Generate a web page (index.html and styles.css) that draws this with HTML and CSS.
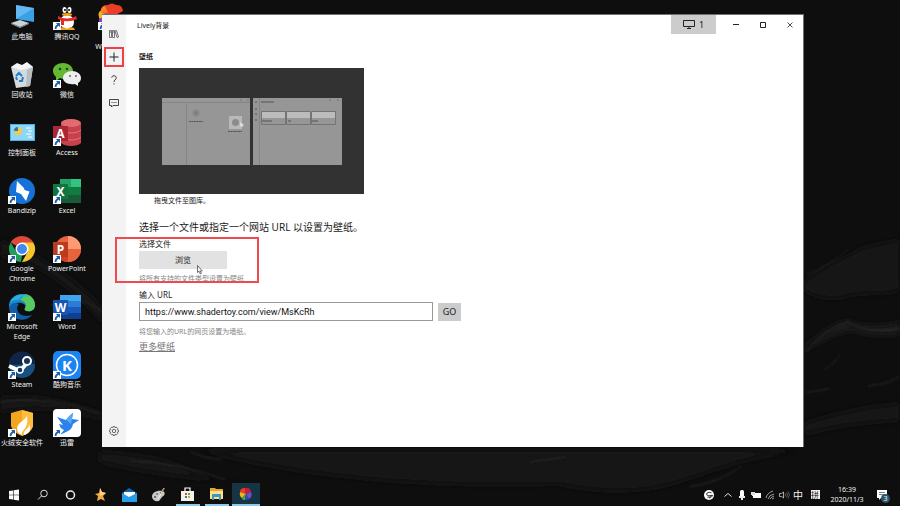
FILE: index.html
```html
<!DOCTYPE html>
<html lang="zh-CN">
<head>
<meta charset="utf-8">
<title>Lively背景</title>
<link rel="stylesheet" href="styles.css">
</head>
<body>
<svg class="wallpaper" viewBox="0 0 900 506" preserveAspectRatio="xMidYMid slice" aria-hidden="true">
  <defs>
    <filter id="soft" x="-10%" y="-10%" width="120%" height="120%"><feGaussianBlur stdDeviation="3"/></filter>
    <filter id="fine" x="-10%" y="-10%" width="120%" height="120%"><feGaussianBlur stdDeviation="1"/></filter>
    <symbol id="shortcut" viewBox="0 0 8 8"><path fill="#fff" d="M0 0h8v8H0z"/><path fill="#1c5cae" d="M3 1h4v4L5.600 3.700C4 4.500 3.500 5.500 3.500 7H1.700C1.500 5 2.500 3.200 4.300 2.400z"/></symbol>
  </defs>
  <g filter="url(#soft)" fill="#181818">
    <path d="M804 282C830 262 850 256 862 248L900 240V290C880 296 860 290 840 298Q820 300 804 290z"/>
    <path fill="#1f1f1f" d="M804 348Q832 322 848 321Q874 330 900 322V334Q870 338 852 330Q830 334 804 352z"/>
    <path d="M804 424Q850 408 900 404V420Q850 422 804 434z"/>
    <path d="M0 256Q50 260 104 325V310Q60 262 0 240z"/>
    <path d="M0 398Q40 392 104 414V420Q50 402 0 412z"/>
    <path d="M100 452Q160 455 190 470T250 482Q180 480 100 462z"/>
    <path fill="#141414" d="M200 450H800Q750 456 690 478T560 484Q350 490 200 450z"/>
  </g>
  <g filter="url(#fine)" fill="none" stroke="#2c2c2c">
    <path d="M806 275Q830 264 848 250M806 352Q826 328 848 322Q866 334 900 329M824 370Q834 364 840 355M806 392Q820 392 830 388M868 386Q890 384 900 376M50 306Q70 290 104 312M0 402Q48 394 100 414M130 461Q180 462 226 480M190 452Q210 460 222 459M530 462Q550 459 566 457M690 487Q720 482 742 466"/>
  </g>
</svg>

<main class="desktop">
  <nav class="shortcuts" aria-label="桌面">
    <a class="shortcut" href="#pc"><svg viewBox="0 0 28 28"><path fill="#3aa0e8" d="M8 2l18 3v14L8 16z"/><path fill="#8ed0fa" d="M8 2l18 3-18 11z" opacity=".5"/><path fill="#c9d3da" d="M3 20l9-3 9 3-9 4z"/><path fill="#8e9aa2" d="M3 20v1l9 4v-1zM12 24l9-4v1l-9 4z"/></svg><span>此电脑</span></a>
    <a class="shortcut" href="#bin"><svg viewBox="0 0 28 28"><path fill="#d5dadd" d="M3 6l18-3 4 3-3 19-14 2z"/><path fill="#f5f6f7" d="M3 6l6-4 5 2 5-3 6 5-12 3z"/><path fill="#b6bec3" d="M19 9l6-3-3 19-4 1z"/><path d="M8 15l3-3 3 3M15 16l-1 4h-3M9 19l-1-3" fill="none" stroke="#1d7fd0" stroke-width="2"/></svg><span>回收站</span></a>
    <a class="shortcut" href="#control"><svg viewBox="0 0 28 28"><path fill="#4db1e8" d="M2 5h25v17H2z"/><path fill="#8ed6f8" d="M3 6h23v15H3z"/><circle cx="10" cy="12" r="4" fill="#f3c94a"/><path fill="#247ab8" d="M10 12V8a4 4 0 0 0-4 4z"/><path d="M18 9h5M20 12h4M18 15h5M20 18h4" stroke="#fff"/></svg><span>控制面板</span></a>
    <a class="shortcut" href="#bandizip"><svg viewBox="0 0 28 28"><circle cx="14" cy="14" r="13" fill="#1672d8"/><path fill="#fff" d="M9 4l7 7 .5 2 5 1.500L18 24l-5-7-5-2z"/><use href="#shortcut" y="19" width="8" height="8"/></svg><span>Bandizip</span></a>
    <a class="shortcut" href="#chrome"><svg viewBox="0 0 28 28"><path fill="#dd4a3b" d="M14 14L2.700 7.500a13 13 0 0 1 22.600 0z"/><path fill="#f5c52c" d="M14 7.500h11.300A13 13 0 0 1 14 27l5.600-10z"/><path fill="#22a05a" d="M2.700 7.500L8.400 17l5.600 3.500-1 6.500A13 13 0 0 1 2.700 7.500z"/><circle cx="14" cy="14" r="6.500" fill="#fff"/><circle cx="14" cy="14" r="5" fill="#4488ed"/><use href="#shortcut" y="20" width="8" height="8"/></svg><span>Google Chrome</span></a>
    <a class="shortcut" href="#edge"><svg viewBox="0 0 28 28"><path fill="#1588cf" d="M1 15C0 6 7 1 14 1c8 0 13 5 13 11 0 5-4 7-8 6-2 0-3-2-2-3 3-5-9-9-16 0z"/><path fill="#58c95b" d="M17 1c6 1 10 5 10 11 0 5-4 7-8 6-2 0-3-2-2-3 3-4-1-7-5-8z"/><path fill="#2daee0" d="M2 10C5 2 14-1 21 4c-6-2-9 0-10 3-4-1-7 1-9 3z"/><path fill="#115ca7" d="M11 11c-5 5 0 15 13 11C18 30 2 28 1 15c2-5 6-6 10-4z"/><use href="#shortcut" y="20" width="8" height="8"/></svg><span>Microsoft Edge</span></a>
    <a class="shortcut" href="#steam"><svg viewBox="0 0 28 28"><circle cx="14" cy="14" r="13" fill="#155080"/><path fill="#102448" d="M1 14a13 13 0 0 1 26-1z"/><path d="M1 15l11 5 7-8" fill="none" stroke="#fff" stroke-width="4"/><circle cx="19" cy="10" r="4" fill="#173358" stroke="#fff" stroke-width="2"/><circle cx="12" cy="19" r="3" fill="#173358" stroke="#fff" stroke-width="1.500"/><use href="#shortcut" y="20" width="8" height="8"/></svg><span>Steam</span></a>
    <a class="shortcut" href="#huorong"><svg viewBox="0 0 28 28"><path fill="#f4a51f" d="M3 4l11-3 11 3v13q-2 7-11 10Q5 24 3 17z"/><path fill="#ffbd3e" d="M14 1l11 3v13q-2 7-11 10z"/><path fill="#fff" d="M19 6c0 5-10 7-10 14 0 3 2 5 5 6-1-6 7-5 5-20z"/><path fill="#fff" d="M21 15c1 5-6 5-5 11 5-1 8-6 5-11z"/><use href="#shortcut" y="20" width="8" height="8"/></svg><span>火绒安全软件</span></a>
    <a class="shortcut" href="#qq"><svg viewBox="0 0 28 28"><path fill="#111" d="M6 14C5 5 8 1 14 1s9 4 8 13l3 6-3 1-1 4H7l-1-4-3 1z"/><ellipse cx="14" cy="19" rx="7" ry="7" fill="#fff"/><ellipse cx="11.500" cy="7" rx="2" ry="3" fill="#fff"/><ellipse cx="16.500" cy="7" rx="2" ry="3" fill="#fff"/><circle cx="12" cy="7" r="1"/><circle cx="16" cy="7" r="1"/><ellipse cx="14" cy="11.500" rx="5" ry="1.500" fill="#f5a21b"/><path fill="#e22b25" d="M5 13q9 5 18 0l1 3q-6 3-13 2v4H8v-5l-3-1z"/><path fill="#f5a21b" d="M7 25q4-2 7 1 3-3 7-1l1 2H6z"/><use href="#shortcut" y="19" width="8" height="8"/></svg><span>腾讯QQ</span></a>
    <a class="shortcut" href="#wechat"><svg viewBox="0 0 28 28"><path fill="#65b832" d="M10 2c6 0 10 4 10 8s-4 8-10 8l-3-1-4 3v-4C-4 9 2 2 10 2z"/><path fill="#eee" d="M19 10c5 0 9 3 9 7 0 2-1 4-3 5v3l-3-2c-7 1-12-2-12-6s4-7 9-7z"/><circle cx="7" cy="8" r="1.300" fill="#23451a"/><circle cx="14" cy="8" r="1.300" fill="#23451a"/><circle cx="17" cy="15" r="1" fill="#666"/><circle cx="23" cy="15" r="1" fill="#666"/><use href="#shortcut" y="19" width="8" height="8"/></svg><span>微信</span></a>
    <a class="shortcut" href="#access"><svg viewBox="0 0 28 28"><path fill="#c8414c" d="M8 4v20c4 4 16 4 20 0V4z"/><ellipse cx="18" cy="4" rx="10" ry="4" fill="#e36b70"/><path d="M8 11c4 4 16 4 20 0M8 18c4 4 16 4 20 0" fill="none" stroke="#e8777b"/><path fill="#a92833" d="M0 7h15v15H0z"/><text class="tile-letter" x="7.500" y="19" text-anchor="middle">A</text><use href="#shortcut" y="19" width="8" height="8"/></svg><span>Access</span></a>
    <a class="shortcut" href="#excel"><svg viewBox="0 0 28 28"><path fill="#21a366" d="M7 2h21v24H7z"/><path fill="#33c481" d="M18 2h10v8H18z"/><path fill="#107c41" d="M18 10h10v8H18zM7 10h11v8H7z"/><path fill="#185c37" d="M7 18h21v8H7z"/><path fill="#107640" d="M0 7h15v15H0z"/><text class="tile-letter" x="7.500" y="19" text-anchor="middle">X</text><use href="#shortcut" y="19" width="8" height="8"/></svg><span>Excel</span></a>
    <a class="shortcut" href="#powerpoint"><svg viewBox="0 0 28 28"><circle cx="15" cy="14" r="13" fill="#e8643f"/><path fill="#ff9a73" d="M15 1a13 13 0 0 1 13 13H15z"/><path fill="#cb4526" d="M2 14h26a13 13 0 0 1-26 0z"/><path fill="#e8643f" d="M15 14h13a13 13 0 0 1-13 13z"/><path fill="#bd3b1d" d="M0 7h15v15H0z"/><text class="tile-letter" x="7.500" y="19" text-anchor="middle">P</text><use href="#shortcut" y="20" width="8" height="8"/></svg><span>PowerPoint</span></a>
    <a class="shortcut" href="#word"><svg viewBox="0 0 28 28"><path fill="#41a5ee" d="M7 2h21v7H7z"/><path fill="#2b7cd3" d="M7 8h21v6H7z"/><path fill="#185abd" d="M7 14h21v6H7z"/><path fill="#103f91" d="M7 20h21v6H7z"/><path fill="#1855b3" d="M0 7h15v15H0z"/><text class="tile-letter" x="7.500" y="19" text-anchor="middle">W</text><use href="#shortcut" y="20" width="8" height="8"/></svg><span>Word</span></a>
    <a class="shortcut" href="#kugou"><svg viewBox="0 0 28 28"><rect width="28" height="28" rx="5" fill="#1b83f2"/><circle cx="14" cy="14" r="10.500" fill="none" stroke="#fff" stroke-width="1.500"/><text class="tile-letter large" x="14" y="19.500" text-anchor="middle">K</text><use href="#shortcut" y="20" width="8" height="8"/></svg><span>酷狗音乐</span></a>
    <a class="shortcut" href="#xunlei"><svg viewBox="0 0 28 28"><rect width="28" height="28" rx="4" fill="#fff"/><path fill="#2a82ea" d="M4 8l9 3c2-3 4-5 7-7l-1 6 7 1-6 4c-1 5-4 7-7 8l-6 3 4-5c-3-1-4-3-5-6l4 1z"/><path fill="#56a9f5" d="M13 11c2-3 4-5 7-7l-2 11z"/><use href="#shortcut" y="20" width="8" height="8"/></svg><span>迅雷</span></a>
    <a class="shortcut" href="#lively"><svg viewBox="0 0 28 28"><path fill="#f5b120" d="M1 14Q-1 8 5 7l9 7-5 11Q1 24 1 14z"/><path fill="#ee3d26" d="M3 9Q3 1 10 2q4-3 8 0 6-1 7 6l-11 6z"/><path fill="#f8852a" d="M3 9q-1-5 4-6l3 7z"/><path fill="#8c42b8" d="M1 15h12l-4 11Q1 24 1 15z"/><use href="#shortcut" y="19" width="8" height="8"/></svg><span>Lively Wallpaper</span></a>
  </nav>

  <section class="window" aria-label="Lively背景">
    <nav class="rail" aria-label="导航">
      <button type="button" aria-label="图库"><svg viewBox="0 0 10 10"><path d="M.5 1.500h2v7h-2zM3.500 1.500h2v7h-2zM6 2l1.500-.5L9.500 8l-1.500.5zM.5 3h2M3.500 3h2" fill="none" stroke="#555" stroke-width=".8"/></svg></button>
      <button type="button" class="marked" aria-label="添加"><svg viewBox="0 0 10 10"><path d="M5 .5v9M.5 5h9" stroke="#222" stroke-width="1"/></svg></button>
      <button type="button" aria-label="帮助"><svg viewBox="0 0 10 10"><path d="M2.700 2.700Q3 .7 5 .7t2.300 2Q7.300 4 6 5T5 7M5 8.300v1.200" fill="none" stroke="#444" stroke-width="1"/></svg></button>
      <button type="button" aria-label="反馈"><svg viewBox="0 0 10 10"><path d="M.5 1.500h9v6H4L2.500 9V7.500h-2z" fill="none" stroke="#333" stroke-width=".9"/><path d="M2.500 4.500h1M4.500 4.500h1M6.500 4.500h1" stroke="#333"/></svg></button>
      <button type="button" class="settings" aria-label="设置"><svg viewBox="0 0 10 10"><path d="M4.200.5h1.600l.3 1.200 1.200-.6 1.500 1.500-.6 1.100 1.300.5v1.600l-1.300.5.6 1.100-1.500 1.500-1.200-.6-.3 1.200H4.200l-.3-1.200-1.200.6-1.500-1.500.6-1.100L.5 5.800V4.200l1.300-.5-.6-1.100 1.500-1.500 1.200.6z" fill="none" stroke="#444" stroke-width=".8"/><circle cx="5" cy="5" r="1.700" fill="none" stroke="#444" stroke-width=".8"/></svg></button>
    </nav>
    <div class="pane">
      <header class="titlebar">
        <h1>Lively背景</h1>
        <button type="button" class="screen"><svg viewBox="0 0 12 10"><path d="M.5.500h11v6H.5zM6 7v1M4 8.500h4" fill="none" stroke="#222"/></svg>1</button>
        <div class="controls">
          <button type="button" aria-label="最小化"><svg viewBox="0 0 8 8"><path d="M1 3.500h6" stroke="#222"/></svg></button>
          <button type="button" aria-label="最大化"><svg viewBox="0 0 8 8"><path d="M1.500 1.500h5v5h-5z" fill="none" stroke="#222"/></svg></button>
          <button type="button" aria-label="关闭"><svg viewBox="0 0 8 8"><path d="M1.500 1.500l5 5M6.500 1.500l-5 5" stroke="#222" stroke-width=".8"/></svg></button>
        </div>
      </header>
      <div class="content">
        <h2>壁纸</h2>
        <figure>
          <svg class="preview" viewBox="0 0 225 126" role="img" aria-label="拖曳文件至图库">
            <path fill="#323232" d="M0 0h225v126H0z"/>
            <path fill="#969696" d="M23 30h88v67H23zM114 30h89v67h-89z"/>
            <path d="M23 34.500h88M47.500 35v62M120.500 30v67" stroke="#858585"/>
            <path d="M101 32h2M108 32h2M190 32h2M198 32h2" stroke="#777"/>
            <circle cx="57" cy="45" r="3.500" fill="#888"/><circle cx="57" cy="45" r="1.500" fill="#7c7c7c"/>
            <path d="M50 53.500h14M89 63.500h14" stroke="#555" stroke-dasharray="2 .5"/>
            <rect x="90" y="48" width="13" height="13" fill="#b8b8b8"/><circle cx="96.500" cy="54.500" r="3.500" fill="#8b8b8b"/><path fill="#ddd" d="M101 54l4 3-2 2-2-1z"/>
            <path d="M122 34h13" stroke="#555"/><path d="M116 34h2M116 41h2M116 46h2M116 52h2" stroke="#555"/>
            <path fill="#bcbcbc" d="M123 43h23v7h-23zM148 43h23v7h-23zM172 43h24v7h-24z"/>
            <path fill="none" stroke="#747474" d="M122.500 43.500h24v13h-24zM147.500 43.500h24v13h-24zM172.500 43.500h24v13h-24z"/>
            <path d="M123 53h10M149 53h3M173 53h6" stroke="#555"/>
          </svg>
          <figcaption>拖曳文件至图库。</figcaption>
        </figure>
        <p class="lead">选择一个文件或指定一个网站 URL 以设置为壁纸。</p>
        <div class="file">
          <label for="browse">选择文件</label>
          <button type="button" id="browse">浏览</button>
          <p class="hint">将所有支持的文件类型设置为壁纸</p>
          <span class="highlight"></span>
          <svg class="pointer" viewBox="0 0 6 10" aria-hidden="true"><path d="M.5.500v7l1.600-1.300 1.200 2.700 1.100-.5-1.100-2.500h2z" fill="#fff" stroke="#333" stroke-width=".7"/></svg>
        </div>
        <form class="address">
          <label for="url">输入 URL</label>
          <div class="row">
            <input type="text" id="url" value="https://www.shadertoy.com/view/MsKcRh">
            <button type="button">GO</button>
          </div>
          <p class="hint">将您输入的URL的网页设置为墙纸。</p>
        </form>
        <a class="more" href="#more">更多壁纸</a>
      </div>
    </div>
  </section>
</main>

<footer class="taskbar">
  <div class="apps">
    <button type="button" aria-label="开始"><svg viewBox="0 0 16 16"><path fill="#fff" d="M3 4l4-.6v4.300H3zM7.600 3.300L13 2.500v5.200H7.600zM3 8.300h4v4.300L3 12zM7.600 8.300H13v5.200l-5.400-.8z"/></svg></button>
    <button type="button" aria-label="搜索"><svg viewBox="0 0 16 16"><circle cx="9" cy="6.500" r="3.300" fill="none" stroke="#ddd"/><path d="M6.500 9L3 12.500" stroke="#ddd"/></svg></button>
    <button type="button" aria-label="Cortana"><svg viewBox="0 0 16 16"><circle cx="6.500" cy="8" r="4" fill="none" stroke="#eee" stroke-width="1.500"/></svg></button>
    <button type="button" aria-label="收藏"><svg viewBox="0 0 16 16"><path fill="#f3a840" d="M7 1l2 4 4 1-3 3 2 5-4-2-4 2 1-5-3-2 4-1z"/><path fill="#ffd37f" d="M7 1l2 4 4 1-6 3z"/></svg></button>
    <button type="button" aria-label="邮件"><svg viewBox="0 0 16 16"><path fill="#0f63ad" d="M0 6l7-5 8 5v8H0z"/><path fill="#fff" d="M2 5h11v6H2z"/><path fill="#2a9de8" d="M0 6l7 4 8-4v9H0z"/></svg></button>
    <button type="button" aria-label="画图"><svg viewBox="0 0 16 16"><path fill="#c9c8c2" d="M1 10C1 5 6 3 12 4q4 3-1 6l-3 4q-6 1-7-4z"/><circle cx="4" cy="10" r="1" fill="#555"/><circle cx="6" cy="7" r="1" fill="#777"/><circle cx="10" cy="6" r="1" fill="#555"/><path d="M13 1L7 12" stroke="#eee"/><path d="M13 1l-2 4" stroke="#b68c55" stroke-width="1.500"/></svg></button>
    <button type="button" class="open" aria-label="商店"><svg viewBox="0 0 16 16"><path fill="#f2f2ed" d="M1 5h13v10H1z"/><path d="M5 5V2h5v3" fill="none" stroke="#fff" stroke-width="1.200"/><path fill="#bd5734" d="M5 7h2v2H5z"/><path fill="#7a9d38" d="M8 7h2v2H8z"/><path fill="#39799d" d="M5 10h2v2H5z"/><path fill="#d8a42b" d="M8 10h2v2H8z"/></svg></button>
    <button type="button" class="open" aria-label="文件资源管理器"><svg viewBox="0 0 16 16"><path fill="#e7a630" d="M1 2h5l1 1h7v10H1z"/><path fill="#ffe083" d="M1 5h13v8H1z"/><path fill="#3c96cd" d="M3 8h9v6h-2v-3H5v3H3z"/></svg></button>
    <button type="button" class="open active" aria-label="Lively"><svg viewBox="0 0 16 16"><path fill="#ef3b28" d="M2 6q0-4 5-4l1 6z"/><path fill="#c22034" d="M7 2q5-1 6 4L8 8z"/><path fill="#f2b421" d="M2 6l6 2-4 4q-3-2-2-6z"/><path fill="#3eae43" d="M8 8l-1 6q-3 0-3-2z"/><path fill="#304bc1" d="M8 8l3 5q-2 1-4 1z"/><path fill="#6b4fd0" d="M8 8l5-2q2 4-2 7z"/></svg></button>
  </div>
  <div class="tray">
    <button type="button" class="wide" aria-label="输入法"><svg viewBox="0 0 12 12"><circle cx="6" cy="6" r="5" fill="#fff"/><path d="M8.500 3.700Q4 2.500 3.700 5T8 6.500 6 9.200M4.500 8.300Q7 8.500 8.300 6.500" fill="none" stroke="#222" stroke-width=".9"/></svg></button>
    <button type="button" aria-label="显示隐藏的图标"><svg viewBox="0 0 12 12"><path d="M2.500 7.500L6 4.500l3.500 3" fill="none" stroke="#ddd"/></svg></button>
    <button type="button" aria-label="麦克风"><svg viewBox="0 0 12 12"><rect x="4" y="1" width="4" height="7" rx="1.500" fill="#fff"/><path fill="#eee" d="M3 7h6v2H7v2H5V9H3z"/></svg></button>
    <button type="button" aria-label="电池"><svg viewBox="0 0 12 12"><path fill="#fff" d="M3 4h8v5H3z"/><path fill="#ddd" d="M1 3h4v3H3v1H2V6H1z"/></svg></button>
    <button type="button" aria-label="网络"><svg viewBox="0 0 12 12"><path d="M2 9Q3 4 9 2M4 10q1-4 6-5M6 10q1-2 4-3M8 10l2-1" fill="none" stroke="#aaa" stroke-width=".9"/></svg></button>
    <button type="button" aria-label="音量"><svg viewBox="0 0 12 12"><path d="M1.500 4.500h2L5.500 3v6L3.500 7.500h-2z" fill="none" stroke="#ccc" stroke-width=".8"/><path d="M7 4.500q1 1.500 0 3M8.500 3.500q2 2.500 0 5M10 2.500q3 3.500 0 7" fill="none" stroke="#777" stroke-width=".7"/></svg></button>
    <button type="button">中</button>
    <button type="button" class="ime" aria-label="拼音"><span>拼</span></button>
    <time datetime="2020-11-03T16:39">16:39<br>2020/11/3</time>
    <button type="button" class="notices" aria-label="通知"><svg viewBox="0 0 12 12"><path fill="#fff" d="M1 1h10v8H5l-2 2V9H1z"/><path d="M3 3.500h6M3 5.500h6" stroke="#666" stroke-width=".8"/></svg><span class="badge">3</span></button>
  </div>
</footer>
</body>
</html>
```

FILE: styles.css
```css
* {
  box-sizing: border-box;
}

body {
  display: flex;
  flex-direction: column;
  min-height: 100vh;
  margin: 0;
  background: #0e0e0e;
  color: #1a1a1a;
  font: 7px/10px "Noto Sans", "Noto Sans CJK SC", sans-serif;
}

h1, h2, p, figure {
  margin: 0;
  font: inherit;
}

button {
  display: flex;
  align-items: center;
  justify-content: center;
  margin: 0;
  padding: 0;
  border: 0;
  background: none;
  color: inherit;
  font: inherit;
}

svg {
  display: block;
}

.wallpaper {
  position: absolute;
  inset: 0;
  width: 100%;
  height: 100%;
}

.desktop {
  position: relative;
  flex: 1;
}

/* Desktop shortcuts */
.shortcuts {
  display: grid;
  grid-template-rows: repeat(8, 58px);
  grid-auto-flow: column;
  grid-auto-columns: 44px;
  column-gap: 1px;
  justify-content: start;
}

.shortcut {
  display: flex;
  flex-direction: column;
  align-items: center;
  gap: 1px;
  padding-top: 3px;
  color: #f2f2f2;
  text-align: center;
  text-decoration: none;
}

.shortcut svg {
  width: 28px;
  height: 28px;
}

.tile-letter {
  fill: #fff;
  font-size: 12px;
  font-weight: 700;
}

.tile-letter.large {
  font-size: 15px;
}

/* Application window */
.window {
  position: absolute;
  inset: 14px 96px 36px 102px;
  display: flex;
  border: solid #6c7378;
  border-width: 1px 1px 0 0;
  background: #fff;
}

.rail {
  display: flex;
  flex-direction: column;
  align-items: center;
  width: 24px;
  padding: 9px 0 3px;
  background: #f3f3f3;
}

.rail button {
  width: 20px;
  height: 20px;
  margin-bottom: 3px;
}

.rail svg {
  width: 10px;
  height: 10px;
}

.rail .marked {
  border: 2px solid #ef4047;
}

.rail .settings {
  margin-top: auto;
}

.pane {
  flex: 1;
}

.titlebar {
  display: flex;
  height: 22px;
  padding-left: 11px;
  line-height: 22px;
}

.titlebar h1 {
  flex: 1;
}

.screen {
  gap: 4px;
  width: 45px;
  height: 19px;
  background: #ccc;
  font-size: 9px;
}

.screen svg {
  width: 12px;
  height: 10px;
}

.controls {
  display: flex;
  padding-left: 6px;
}

.controls button {
  width: 27px;
  height: 19px;
}

.controls svg {
  width: 8px;
  height: 8px;
}

.content {
  padding: 15px 13px;
}

h2 {
  font-weight: 700;
}

.preview {
  width: 225px;
  margin-top: 6px;
}

figcaption {
  padding: 2px 15px 0;
}

.lead {
  margin-top: 14px;
  font-size: 10px;
  line-height: 14px;
}

label {
  display: block;
  font-size: 8px;
}

.file {
  position: relative;
  margin-top: 5px;
}

.file button {
  width: 88px;
  height: 18px;
  margin: 2px 0 5px;
  background: #e2e2e2;
  font-size: 8px;
}

.hint {
  color: #858585;
}

.highlight {
  position: absolute;
  top: -2px;
  left: -24px;
  width: 144px;
  height: 46px;
  border: 2px solid #ee4b4e;
}

.pointer {
  position: absolute;
  top: 26px;
  left: 58px;
  width: 6px;
  height: 10px;
}

.address {
  margin-top: 6px;
}

.row {
  display: flex;
  align-items: center;
  gap: 5px;
  margin: 2px 0 6px;
}

.row input {
  flex: 0 1 294px;
  min-width: 0;
  height: 19px;
  padding: 0 5px;
  border: 1px solid #999;
  background: #fff;
  color: #111;
  font: 9px/12px Roboto, "Noto Sans CJK SC", sans-serif;
}

.row button {
  width: 23px;
  height: 18px;
  background: #ccc;
  font-size: 9px;
}

.more {
  display: inline-block;
  margin-top: 4px;
  color: #777;
  font-size: 9px;
  line-height: 12px;
}

/* Taskbar */
.taskbar {
  position: relative;
  display: flex;
  justify-content: space-between;
  height: 23px;
  color: #f2f2f2;
}

.apps {
  display: flex;
  gap: 1px;
}

.apps button {
  width: 28px;
}

.apps svg {
  width: 16px;
  height: 16px;
}

.apps .open {
  width: 24px;
  margin: 0 2px;
  border-bottom: 2px solid #8fc9ec;
}

.apps .active {
  width: 28px;
  margin: 0;
  background: #173442;
}

.tray {
  display: flex;
  align-items: center;
  padding-right: 8px;
}

.tray button {
  width: 14px;
  font-size: 10px;
}

.tray svg {
  width: 12px;
  height: 12px;
}

.tray .wide {
  margin-right: 5px;
}

.tray .ime {
  margin: 0 6px 0 3px;
}

.ime span {
  width: 9px;
  background: #f2f2f2;
  color: #111;
  font-size: 8px;
  line-height: 9px;
  text-align: center;
}

time {
  width: 38px;
  text-align: center;
}

.tray .notices {
  position: relative;
  width: 20px;
  margin-left: 6px;
}

.badge {
  position: absolute;
  top: 5px;
  right: 2px;
  width: 9px;
  height: 9px;
  border-radius: 50%;
  background: #2a5568;
  color: #fff;
  font-size: 7px;
  line-height: 9px;
}
```
